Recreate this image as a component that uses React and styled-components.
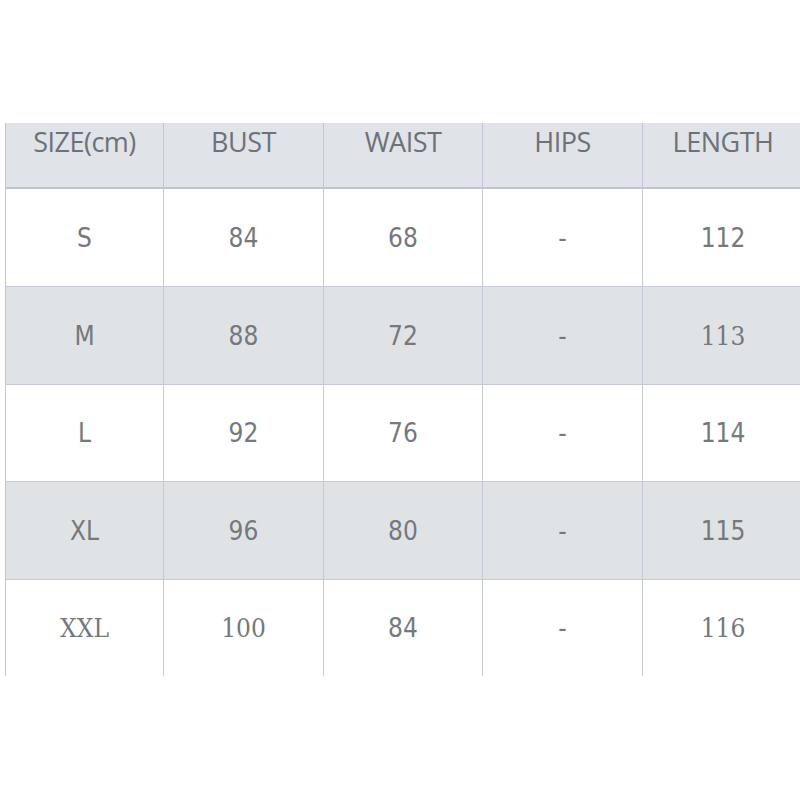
import React from "react";
import styled, { createGlobalStyle } from "styled-components";

const GlobalStyle = createGlobalStyle`
  body {
    margin: 0;
    background: #ffffff;
    overflow: hidden;
  }
`;

const headers = ["SIZE(cm)", "BUST", "WAIST", "HIPS", "LENGTH"];

// serif marks cells that the source image renders in a serif face
const rows = [
  { cells: ["S", "84", "68", "-", "112"], shaded: false, serif: [] },
  { cells: ["M", "88", "72", "-", "113"], shaded: true, serif: [4] },
  { cells: ["L", "92", "76", "-", "114"], shaded: false, serif: [] },
  { cells: ["XL", "96", "80", "-", "115"], shaded: true, serif: [] },
  { cells: ["XXL", "100", "84", "-", "116"], shaded: false, serif: [0, 1, 4] },
];

const App = () => {
  return (
    <Page>
      <GlobalStyle />
      <Table>
        {headers.map((label, i) => (
          <HeaderCell key={label} $last={i === headers.length - 1}>
            {label}
          </HeaderCell>
        ))}
        {rows.map((row, r) =>
          row.cells.map((value, c) => (
            <Cell
              key={`${r}-${c}`}
              $shaded={row.shaded}
              $serif={row.serif.includes(c)}
              $last={c === row.cells.length - 1}
              $bottom={r === rows.length - 1}
            >
              {value}
            </Cell>
          ))
        )}
      </Table>
    </Page>
  );
};

export default App;

const Page = styled.div`
  width: 800px;
  height: 800px;
  padding: 123px 0 0 5px;
  box-sizing: border-box;
  overflow: hidden;
`;

const Table = styled.div`
  display: grid;
  grid-template-columns: 158px 160px 159px 160px 160px;
  grid-template-rows: 66px 98px 98px 97px 98px 96px;
  border-left: 1.5px solid #c3c6da;
  width: max-content;
`;

const HeaderCell = styled.div`
  background: #e0e3e7;
  border-right: ${(p) => (p.$last ? "none" : "1.5px solid #c3c6da")};
  border-bottom: 2px solid #bfc3d5;
  display: flex;
  justify-content: center;
  align-items: flex-start;
  padding-top: 0;
  box-sizing: border-box;
  font-family: "Open Sans", "DejaVu Sans", sans-serif;
  font-size: 27px;
  line-height: 38px;
  color: #6d7178;
  letter-spacing: -0.5px;
`;

const Cell = styled.div`
  background: ${(p) => (p.$shaded ? "#e0e3e6" : "#ffffff")};
  border-right: ${(p) => (p.$last ? "none" : "1.5px solid #c6c9da")};
  border-bottom: ${(p) => (p.$bottom ? "none" : "1.5px solid #c6c9dc")};
  display: flex;
  justify-content: center;
  align-items: center;
  box-sizing: border-box;
  font-family: ${(p) =>
    p.$serif
      ? `"DejaVu Serif Condensed", "DejaVu Serif", "Liberation Serif", serif`
      : `"DejaVu Sans Condensed", "DejaVu Sans", sans-serif`};
  font-stretch: condensed;
  font-size: 26px;
  color: #75787c;
`;
